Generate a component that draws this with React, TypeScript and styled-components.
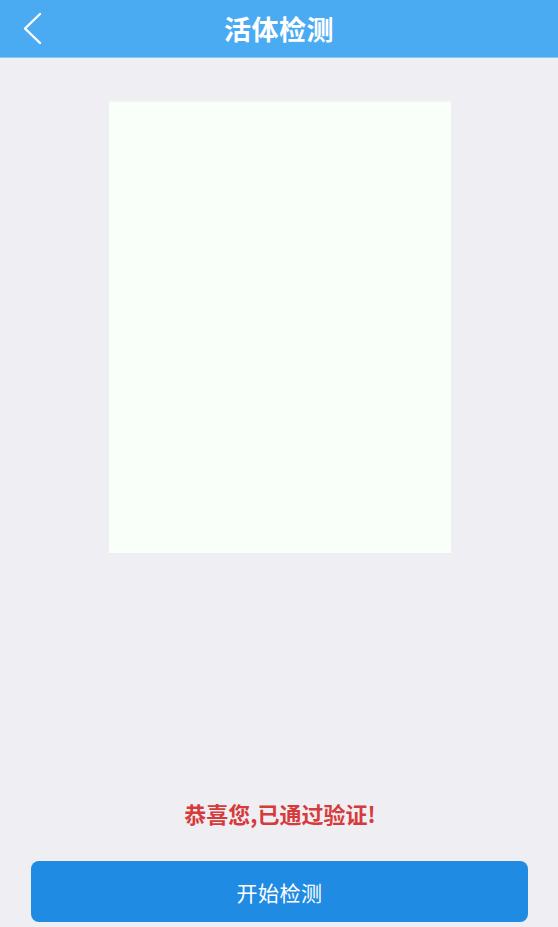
import styled, { createGlobalStyle } from "styled-components";

const GlobalStyle = createGlobalStyle`
  html, body {
    margin: 0;
    padding: 0;
    background: #efeef3;
  }
  body {
    font-family: "Noto Sans CJK SC", "Noto Sans", sans-serif;
  }
`;

const Page = styled.div`
  display: flex;
  flex-direction: column;
  height: 927px;
  background: #efeef3;
`;

const Header = styled.header`
  position: relative;
  display: flex;
  align-items: center;
  justify-content: center;
  height: 58px;
  background: #4aabf2;
  border-bottom: 1px solid #8cc9f3;
  box-sizing: border-box;
`;

const BackButton = styled.button`
  position: absolute;
  left: 18px;
  top: 10px;
  width: 28px;
  height: 38px;
  padding: 0;
  border: none;
  background: transparent;
  display: flex;
  align-items: center;
  justify-content: center;
`;

const Title = styled.h1`
  margin: 0;
  color: #ffffff;
  font-size: 27px;
  font-weight: 700;
  letter-spacing: 0.5px;
`;

const Content = styled.main`
  flex: 1;
  display: flex;
  flex-direction: column;
  align-items: center;
  padding: 42px 0 0 2px;
`;

const Preview = styled.div`
  width: 342px;
  height: 453px;
  background: #f9fff9;
  border-top: 2px solid #eef3f4;
  box-sizing: border-box;
`;

const Message = styled.p`
  margin: auto 0 0;
  color: #d63b3b;
  font-size: 22px;
  font-weight: 700;
  line-height: 30px;
  transform: translateY(-2px);
`;

const Footer = styled.div`
  padding: 31px 30px 5px 31px;
`;

const StartButton = styled.button`
  width: 100%;
  height: 61px;
  border: none;
  border-radius: 8px;
  background: #1f8be3;
  color: #ffffff;
  font-family: "Noto Sans CJK SC", "Noto Sans", sans-serif;
  font-size: 21px;
  letter-spacing: 0.5px;
`;

function App() {
  return (
    <Page>
      <GlobalStyle />
      <Header>
        <BackButton aria-label="返回">
          <svg width="22" height="34" viewBox="0 0 22 34" fill="none">
            <path d="M19 2 L4 16.5 L19 31" stroke="#ffffff" strokeWidth="2.4" strokeLinecap="round" strokeLinejoin="round" />
          </svg>
        </BackButton>
        <Title>活体检测</Title>
      </Header>
      <Content>
        <Preview />
        <Message>恭喜您,已通过验证!</Message>
      </Content>
      <Footer>
        <StartButton>开始检测</StartButton>
      </Footer>
    </Page>
  );
}

export default App;
